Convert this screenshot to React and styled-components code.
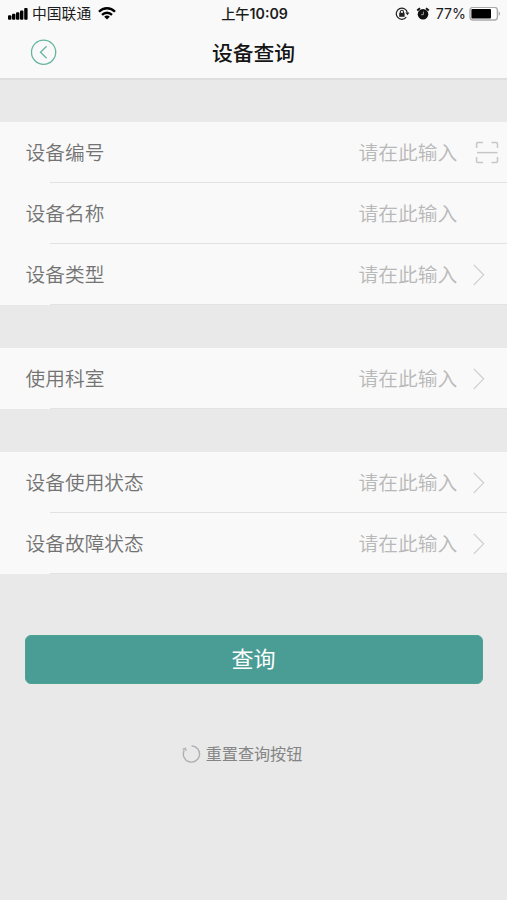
import React from 'react'
import styled, { createGlobalStyle } from 'styled-components'

const GlobalStyle = createGlobalStyle`
    * {
        box-sizing: border-box;
    }
    body {
        margin: 0;
        background-color: #e9e9e9;
        font-family: "Liberation Sans", "Noto Sans CJK SC", sans-serif;
    }
`
const Screen = styled.div`
    display: flex;
    flex-direction: column;
    width: 507px;
    height: 900px;
    overflow: hidden;
    background-color: #e9e9e9;
`
const Header = styled.header`
    height: 80px;
    flex: none;
    background-color: #f9f9f9;
    border-bottom: 2px solid #dedede;
`
const StatusBar = styled.div`
    display: grid;
    grid-template-columns: 1fr auto 1fr;
    align-items: center;
    height: 27px;
    padding: 0 6px 0 8px;
    color: #1c1c1c;
    font-size: 14.8px;
    line-height: 27px;
`
const StatusSide = styled.div`
    display: flex;
    align-items: center;
    justify-content: ${props => props.$end ? 'flex-end' : 'flex-start'};
`
const Carrier = styled.span`
    margin: 0 7px 0 4px;
    padding-top: 2px;
    line-height: 25px;
`
const Clock = styled.span`
    font-family: Inter, "Noto Sans CJK SC", sans-serif;
    font-size: 14.2px;
    font-weight: 500;
`
const ClockDigits = styled.span`
    font-weight: 600;
`
const Percent = styled.span`
    margin: 0 3px 0 6px;
    font-family: Inter, sans-serif;
    font-size: 14.2px;
`
const NavBar = styled.nav`
    display: grid;
    grid-template-columns: 1fr auto 1fr;
    align-items: center;
    height: 51px;
    padding: 0 30px;
`
const BackButton = styled.button`
    display: flex;
    width: 27px;
    height: 27px;
    padding: 0;
    border: 0;
    background: none;
`
const Title = styled.h1`
    margin: 0;
    padding-top: 2px;
    color: #151515;
    font-size: 20.8px;
    font-weight: 500;
    line-height: 30px;
`
const Form = styled.main`
    display: flex;
    flex-direction: column;
    gap: 43px;
    padding-top: 42px;
`
const Group = styled.section`
    background-color: #f9f9f9;
`
const Row = styled.div`
    display: flex;
    align-items: center;
    height: 61px;
    padding-left: 25.6px;
    background: linear-gradient(#e2e2e2, #e2e2e2) 50px 100% / 100% 1.5px no-repeat;
    font-size: 19.7px;
    font-weight: 350;
    line-height: 30px;
`
const Label = styled.span`
    flex: 1;
    color: #737373;
`
const Value = styled.span`
    color: #b8b8b8;
    font-size: 19.8px;
`
const Accessory = styled.span`
    display: flex;
    align-items: center;
    width: 49.6px;
    height: 24px;
    padding-left: ${props => props.$scan ? '17.6px' : '15.6px'};
`
const Actions = styled.div`
    display: flex;
    flex-direction: column;
    align-items: center;
    padding: 61px 24px 0 25px;
`
const SubmitButton = styled.button`
    width: 100%;
    height: 49px;
    padding: 0 1px 0 0;
    border: 1px solid #4ba392;
    border-radius: 6px;
    background-color: #4a9d95;
    color: #fff;
    font-family: inherit;
    font-size: 22px;
    line-height: 46px;
`
const ResetButton = styled.button`
    display: flex;
    align-items: center;
    gap: 5px;
    margin: 58px 0 0 -24px;
    padding: 0;
    border: 0;
    background: none;
    color: #858585;
    font-family: inherit;
    font-size: 16.1px;
    line-height: 24px;
`

const SignalIcon = () => (
    <svg width="20" height="14" viewBox="0 0 20 14" fill="#000">
        <rect x="0" y="8.2" width="3.4" height="4.6" rx="1" />
        <rect x="4" y="6.8" width="3.4" height="6" rx="1" />
        <rect x="8" y="5.2" width="3.4" height="7.6" rx="1" />
        <rect x="12" y="3.4" width="3.4" height="9.4" rx="1" />
        <rect x="16.2" y="1" width="3.4" height="11.8" rx="1" />
    </svg>
)

const WifiIcon = () => (
    <svg width="18" height="14" viewBox="0 0 18 14" fill="none" stroke="#000" strokeWidth="2.3">
        <path d="M1 4.7C5.4.1 12.6.1 17 4.7" />
        <path d="M4 7.9C6.8 5 11.2 5 14 7.9" />
        <path d="M9 12.5L6.2 9.7C7.8 8.2 10.2 8.2 11.8 9.7Z" fill="#000" stroke="none" />
    </svg>
)

const RotationLockIcon = () => (
    <svg width="15" height="14" viewBox="0 0 15 14" fill="none" stroke="#222" strokeWidth="1.2">
        <path d="M11.3 10.2A5.6 5.6 0 1 1 12.4 5.6" />
        <path d="M10.4 5.6H14.4L12.4 8.2Z" fill="#222" stroke="none" />
        <rect x="4.2" y="5.8" width="5.4" height="4" fill="#222" stroke="none" />
        <path d="M5.3 6.1V4.9A1.6 1.6 0 0 1 8.5 4.9V6.1" strokeWidth="1.1" />
    </svg>
)

const AlarmIcon = () => (
    <svg width="14" height="14" viewBox="0 0 14 14" fill="none">
        <circle cx="7" cy="7.2" r="5.3" fill="#111" />
        <path d="M1.2 3.5L4 1.2M12.8 3.5L10 1.2" stroke="#111" strokeWidth="1.9" />
        <path d="M7.4 4.6V7.7H5" stroke="#aaa" strokeWidth=".9" />
    </svg>
)

const BatteryIcon = () => (
    <svg width="32" height="14" viewBox="0 0 32 14">
        <rect x="1" y="0.4" width="27.4" height="12.6" rx="3" fill="#fff" stroke="#aaa" strokeWidth="1.4" />
        <rect x="2.4" y="2" width="19.6" height="9.4" rx="1" fill="#000" />
        <path d="M29.7 4.4C31.4 5 31.4 8.2 29.7 8.8Z" fill="#aaa" />
    </svg>
)

const BackIcon = () => (
    <svg width="27" height="27" viewBox="0 0 27 27" fill="none" stroke="#65b5a0" strokeWidth="1.3">
        <circle cx="13.6" cy="13.2" r="12.1" />
        <path d="M16.6 7.3L10.5 13.3L16.6 19.3" />
    </svg>
)

const ScanIcon = () => (
    <svg width="24" height="24" viewBox="0 0 24 24" fill="none" stroke="#c6c6c6" strokeWidth="1.5" style={{ flex: 'none' }}>
        <path d="M1.6 7V2.7Q1.6 1.5 2.8 1.5H8M16.5 1.5H21.3Q22.5 1.5 22.5 2.7V7M22.5 16V20.3Q22.5 21.5 21.3 21.5H16.5M8 21.5H2.8Q1.6 21.5 1.6 20.3V16" />
        <path d="M2 11.6H22.5" />
    </svg>
)

const ArrowIcon = () => (
    <svg width="13" height="24" viewBox="0 0 13 24" fill="none" stroke="#cdcdcd" strokeWidth="1.2">
        <path d="M.8 1.8L10.6 11.8L.8 21.8" />
    </svg>
)

const ResetIcon = () => (
    <svg width="19" height="19" viewBox="0 0 19 19" fill="none" stroke="#b0b0b0" strokeWidth="1.4">
        <path d="M9.5.9A8.1 8.1 0 1 1 2.2 5.4" />
        <path d="M.6 4.4L3.2 3.4L4.3 5.8" />
    </svg>
)

const groups = [
    [
        { label: '设备编号', icon: 'scan' },
        { label: '设备名称' },
        { label: '设备类型', icon: 'arrow' },
    ],
    [
        { label: '使用科室', icon: 'arrow' },
    ],
    [
        { label: '设备使用状态', icon: 'arrow' },
        { label: '设备故障状态', icon: 'arrow' },
    ],
]

export default function App() {
    return (
        <Screen>
            <GlobalStyle />
            <Header>
                <StatusBar>
                    <StatusSide>
                        <SignalIcon />
                        <Carrier>中国联通</Carrier>
                        <WifiIcon />
                    </StatusSide>
                    <Clock>上午<ClockDigits>10:09</ClockDigits></Clock>
                    <StatusSide $end>
                        <RotationLockIcon />
                        <span style={{ width: 6 }} />
                        <AlarmIcon />
                        <Percent>77%</Percent>
                        <BatteryIcon />
                    </StatusSide>
                </StatusBar>
                <NavBar>
                    <BackButton aria-label="返回"><BackIcon /></BackButton>
                    <Title>设备查询</Title>
                </NavBar>
            </Header>
            <Form>
                {groups.map((rows, i) => (
                    <Group key={i}>
                        {rows.map(row => (
                            <Row key={row.label}>
                                <Label>{row.label}</Label>
                                <Value>请在此输入</Value>
                                <Accessory $scan={row.icon === 'scan'}>
                                    {row.icon === 'scan' && <ScanIcon />}
                                    {row.icon === 'arrow' && <ArrowIcon />}
                                </Accessory>
                            </Row>
                        ))}
                    </Group>
                ))}
            </Form>
            <Actions>
                <SubmitButton>查询</SubmitButton>
                <ResetButton>
                    <ResetIcon />
                    重置查询按钮
                </ResetButton>
            </Actions>
        </Screen>
    )
}
